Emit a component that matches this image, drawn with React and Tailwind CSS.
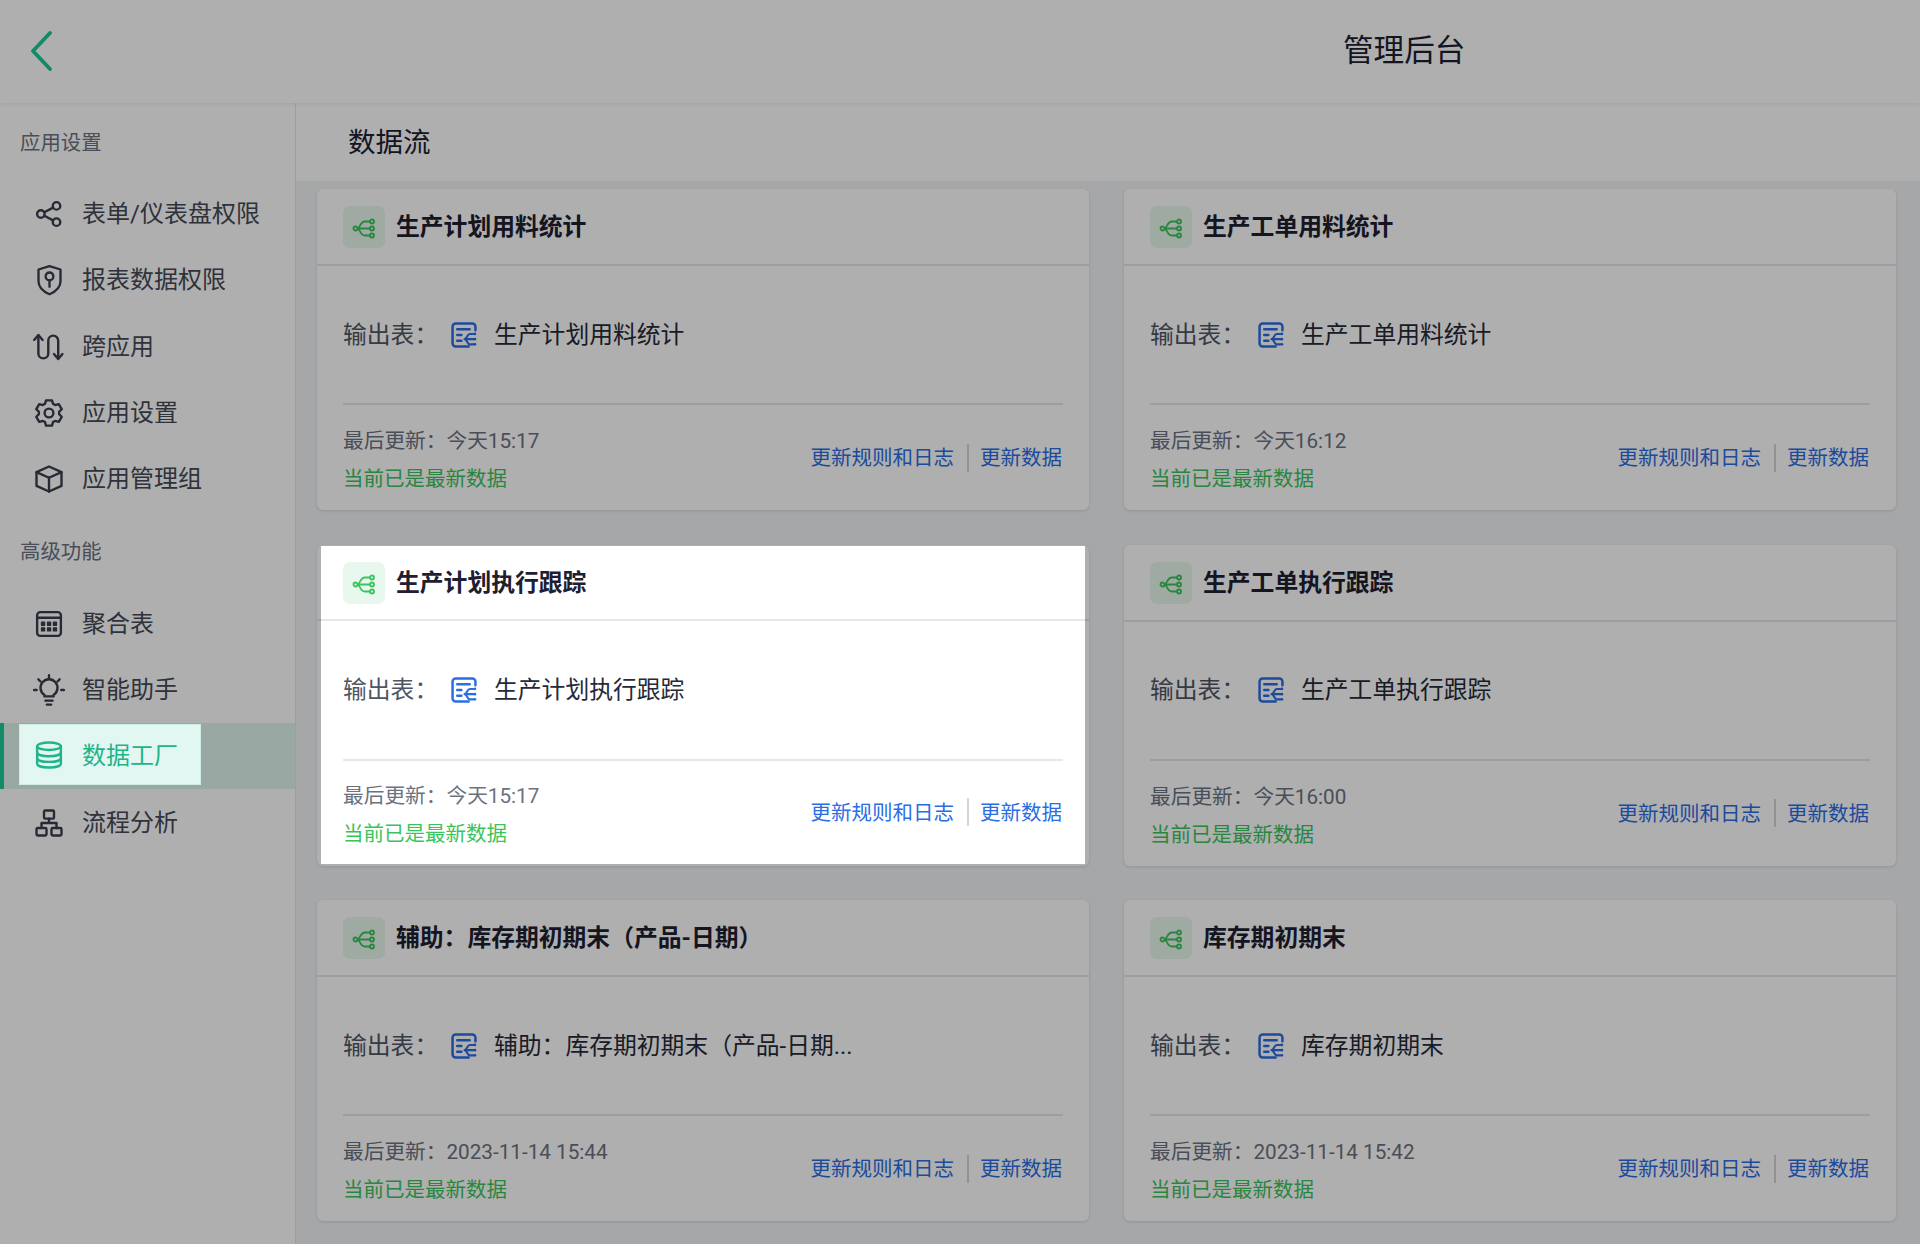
import React from "react";

const FONT = "[font-family:Roboto,'Noto_Sans_CJK_SC',sans-serif]";

const Svg = ({ children, className = "w-[30px] h-[30px]", sw = 1.9 }) => (
  <svg viewBox="0 0 24 24" fill="none" stroke="currentColor" strokeWidth={sw} strokeLinecap="round" strokeLinejoin="round" className={`shrink-0 ${className}`}>
    {children}
  </svg>
);

const icons = {
  share: (
    <Svg>
      <circle cx="18" cy="5.500" r="3" />
      <circle cx="5.500" cy="12" r="3" />
      <circle cx="18" cy="18.500" r="3" />
      <path d="M8.200 10.600l7.100-3.700M8.200 13.400l7.100 3.700" />
    </Svg>
  ),
  shield: (
    <Svg className="w-[33px] h-[33px]" sw={1.700}>
      <path d="M12 1.500l8 2.500v8.500c0 4-3.500 7.500-8 9.500-4.500-2-8-5.500-8-9.500V4z" />
      <circle cx="12" cy="9" r="2.800" />
      <path d="M12 11.800v4.700" />
    </Svg>
  ),
  cross: (
    <Svg className="w-[34px] h-[34px]" sw={1.700}>
      <path d="M1.500 7L4.500 3.500 7.500 7" />
      <path d="M4.500 4v12.500a3.500 3.500 0 0 0 7 0v-9a3.500 3.500 0 0 1 7 0V20" />
      <path d="M15.500 17l3 3.500 3-3.500" />
    </Svg>
  ),
  gear: (
    <Svg>
      <path d="M9.600 2.500h4.800l.8 2.900 1.700 1 2.900-.8 2.400 4.200-2.100 2.200v2l2.100 2.200-2.400 4.200-2.900-.8-1.700 1-.8 2.900H9.600l-.8-2.900-1.700-1-2.900.8-2.400-4.200 2.100-2.200v-2L1.800 9.800l2.400-4.200 2.900.8 1.700-1z" transform="translate(0 -0.500) scale(1 0.96)" />
      <circle cx="12" cy="12" r="3.500" />
    </Svg>
  ),
  box: (
    <Svg>
      <path d="M12 2l10 4.500v11L12 22 2 17.500v-11z" />
      <path d="M2 6.500L12 11l10-4.500M12 11v11" />
    </Svg>
  ),
  table: (
    <Svg>
      <rect x="2.500" y="2.500" width="19" height="19" rx="2.500" />
      <path d="M2.500 7h19" />
      <path d="M6 10.500h2.500V13H6zM10.800 10.500h2.500V13h-2.500zM15.500 10.500H18V13h-2.500zM6 15h2.500v2.500H6zM10.800 15h2.500v2.500h-2.500zM15.500 15H18v2.500h-2.500z" fill="currentColor" strokeWidth="1" />
    </Svg>
  ),
  bulb: (
    <Svg className="w-[34px] h-[34px]" sw={1.700}>
      <path d="M12 1.500v2.200M1.500 12h1.800M20.700 12h1.800M4.500 4.500L6 6M19.500 4.500L18 6" />
      <path d="M8.800 16.500v-1A6 6 0 1 1 15.200 15.500v1z" />
      <path d="M9.500 19.500h5M10.500 22.300h3" />
    </Svg>
  ),
  db: (
    <Svg>
      <ellipse cx="12" cy="5" rx="9.500" ry="3" />
      <path d="M2.500 5v14c0 1.800 4.300 3 9.500 3s9.500-1.200 9.500-3V5" />
      <path d="M2.500 10c0 1.800 4.300 3 9.500 3s9.500-1.200 9.500-3M2.500 14.500c0 1.800 4.300 3 9.500 3s9.500-1.200 9.500-3" />
    </Svg>
  ),
  flow: (
    <Svg>
      <rect x="8" y="2" width="8" height="6.500" rx="1" />
      <rect x="2" y="16" width="8" height="6" rx="1" />
      <rect x="14" y="16" width="8" height="6" rx="1" />
      <path d="M12 8.500V12M6 16v-4h12v4" />
    </Svg>
  ),
};

const DataflowIcon = () => (
  <svg viewBox="0 0 24 24" fill="none" stroke="currentColor" strokeWidth="1.800" className="w-[24px] h-[24px] mt-[2px] text-[#3cc45c]">
    <circle cx="3.500" cy="12.500" r="2" />
    <path d="M5.500 12.500H18.500M5.500 12.500C8 12.500 8 5.500 13 5.500H18.500M5.500 12.500C8 12.500 8 19.500 13 19.500H18.500" />
    <circle cx="20" cy="5.500" r="2" />
    <circle cx="20" cy="12.500" r="2" />
    <circle cx="20" cy="19.500" r="2" />
  </svg>
);

const TableFlowIcon = () => (
  <svg viewBox="0 0 25 25" fill="none" stroke="currentColor" strokeWidth="2.400" strokeLinecap="round" className="w-[26px] h-[26px] ml-[1px] text-[#2b6de5]">
    <path d="M23.500 8V4.500a3 3 0 0 0-3-3H4.500a3 3 0 0 0-3 3v16a3 3 0 0 0 3 3H17" />
    <path d="M6 7h12M6 12.500h4M6 18h4" />
    <path d="M13 16.500h9M13 16.500c2.500 0 2.500-5 5-5h3.500M13 16.500c2.500 0 2.500 5 5 5h3.500" strokeWidth="2" />
    <circle cx="23" cy="11.500" r="1.300" fill="currentColor" stroke="none" />
    <circle cx="23" cy="16.500" r="1.300" fill="currentColor" stroke="none" />
    <circle cx="23" cy="21.500" r="1.300" fill="currentColor" stroke="none" />
  </svg>
);

const NavItem = ({ icon, label, active }) =>
  active ? (
    <div className="h-[66.300px] bg-[#e0f5ef] border-l-[4px] border-[#1cc998] pl-[15px] pt-[1px]">
      <div className="relative z-20 w-[182px] h-[61px] bg-[#e2f7f1] border border-[#cdeee4] flex items-center pl-[16px] gap-[20px] text-[#1fb48a]">
        <span className="w-[26px] flex justify-center">{icons[icon]}</span>
        <span className="text-[24px] leading-none pt-[2px]">{label}</span>
      </div>
    </div>
  ) : (
    <div className="h-[66.300px] flex items-center pl-[36px] gap-[20px] text-[#454956]">
      <span className="w-[26px] flex justify-center text-[#3a3e4d]">{icons[icon]}</span>
      <span className="text-[24px] leading-none">{label}</span>
    </div>
  );

const Card = ({ title, output, time, hl }) => {
  const inner = (
    <>
      <div className={`${hl ? "h-[75px] pl-[22px] pr-[22px]" : "h-[77px] pl-[26px] pr-[26px]"} shrink-0 flex items-center gap-[11px] border-b-[2px] border-[#e5e7eb]`}>
        <div className={`w-[42px] h-[42px] ${hl ? "mt-[2px]" : "mt-[1px]"} rounded-[7px] bg-[#e8f8ee] flex items-center justify-center`}>
          <DataflowIcon />
        </div>
        <span className={`text-[23.800px] font-bold text-[#1c2030] leading-none ${hl ? "pt-[4px]" : "pt-[3px]"}`}>{title}</span>
      </div>
      <div className={`${hl ? "px-[22px]" : "px-[26px]"} flex-1 flex flex-col`}>
        <div className={`${hl ? "h-[140px]" : "h-[139px]"} shrink-0 flex items-center border-b-[2px] border-[#e5e7eb]`}>
          <span className="text-[23.800px] text-[#4e5563] w-[107px] leading-none pt-[2px]">输出表：</span>
          <TableFlowIcon />
          <span className="text-[23.800px] text-[#262a38] ml-[17px] leading-none pt-[2px]">{output}</span>
        </div>
        <div className="flex-1 flex items-center justify-between">
          <div className="flex flex-col gap-[17px] pt-[6px]">
            <span className="text-[20.700px] leading-[21px] text-[#6b7280]">最后更新：{time}</span>
            <span className="text-[20.500px] leading-[21px] text-[#3cc45c]">当前已是最新数据</span>
          </div>
          <div className="flex items-center text-[20.500px] text-[#2b6de5] leading-none pt-[2px] mr-[1px]">
            <span>更新规则和日志</span>
            <span className="w-[2px] h-[28px] bg-[#d1d5db] ml-[13px] mr-[11px] -mt-[2px]" />
            <span>更新数据</span>
          </div>
        </div>
      </div>
    </>
  );
  return (
    <div className="h-[321px] rounded-[6px] bg-white shadow-[0_1px_3px_rgba(0,0,0,0.12)] flex flex-col relative">
      {hl ? (
        <>
          <div className="absolute left-0 right-0 top-[74px] h-[2px] bg-[#e5e7eb]" />
          <div className="relative z-20 mx-[4px] mt-[1px] mb-[2px] flex-1 flex flex-col bg-white">{inner}</div>
        </>
      ) : (
        inner
      )}
    </div>
  );
};

const cards = [
  { title: "生产计划用料统计", output: "生产计划用料统计", time: "今天15:17" },
  { title: "生产工单用料统计", output: "生产工单用料统计", time: "今天16:12" },
  { title: "生产计划执行跟踪", output: "生产计划执行跟踪", time: "今天15:17", hl: true },
  { title: "生产工单执行跟踪", output: "生产工单执行跟踪", time: "今天16:00" },
  { title: "辅助：库存期初期末（产品-日期）", output: "辅助：库存期初期末（产品-日期...", time: "2023-11-14 15:44" },
  { title: "库存期初期末", output: "库存期初期末", time: "2023-11-14 15:42" },
];

export default function App() {
  return (
    <div className={`relative w-full h-[1244px] overflow-hidden bg-white flex flex-col ${FONT}`}>
      <header className="h-[103px] shrink-0 bg-white shadow-[0_1px_4px_rgba(0,0,0,0.08)] relative z-[1] flex items-center">
        <svg viewBox="0 0 24 40" fill="none" stroke="currentColor" strokeWidth="3.800" strokeLinecap="round" strokeLinejoin="round" className="absolute left-[30px] top-[31px] w-[24px] h-[40px] text-[#1cc998]">
          <path d="M20 2L3 20l17 18" />
        </svg>
        <div className="ml-[1343px] text-[30.600px] leading-none text-[#1c2030]">管理后台</div>
      </header>
      <div className="flex-1 flex min-h-0">
        <aside className="w-[296px] shrink-0 bg-white border-r border-[#e5e7eb]">
          <div className="h-[78px] pl-[20px] pt-[2px] flex items-center text-[20.400px] text-[#6b7280] leading-none">应用设置</div>
          <NavItem icon="share" label="表单/仪表盘权限" />
          <NavItem icon="shield" label="报表数据权限" />
          <NavItem icon="cross" label="跨应用" />
          <NavItem icon="gear" label="应用设置" />
          <NavItem icon="box" label="应用管理组" />
          <div className="h-[78px] pl-[20px] pt-[2px] flex items-center text-[20.400px] text-[#6b7280] leading-none">高级功能</div>
          <NavItem icon="table" label="聚合表" />
          <NavItem icon="bulb" label="智能助手" />
          <NavItem icon="db" label="数据工厂" active />
          <NavItem icon="flow" label="流程分析" />
        </aside>
        <main className="flex-1 bg-[#f2f3f5] min-w-0">
          <div className="h-[78px] bg-white pl-[52px] pt-[2px] flex items-center text-[27.500px] text-[#1c2030] leading-none">数据流</div>
          <div className="grid grid-cols-2 gap-x-[35px] gap-y-[34.500px] pl-[21px] pr-[24px] pt-[8px]">
            {cards.map((c) => (
              <Card key={c.title} {...c} />
            ))}
          </div>
        </main>
      </div>
      <div className="absolute inset-0 z-10 bg-[rgba(0,0,0,0.314)]" />
    </div>
  );
}
